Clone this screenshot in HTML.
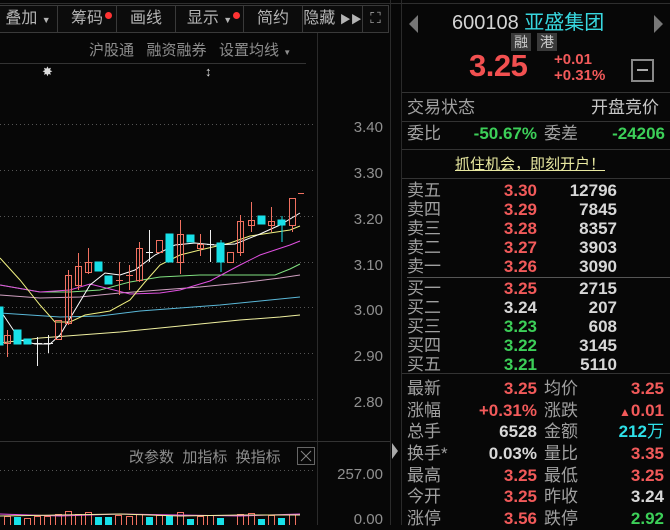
<!DOCTYPE html>
<html><head><meta charset="utf-8"><style>
*{margin:0;padding:0;box-sizing:border-box}
body{width:670px;height:525px;background:#070707;overflow:hidden;position:relative;font-family:"Liberation Sans","Noto Sans CJK SC",sans-serif;color:#a8a8a8}
.a{position:absolute;white-space:nowrap}
.tb{position:absolute;top:5px;height:28px;border:1px solid #3a3a3a;background:#0c0c0c;font-size:16px;color:#b4b4b4;line-height:26px;text-align:center}
.dot{position:absolute;width:7px;height:7px;border-radius:50%;background:#f33;top:6px}
.r{color:#f25a5a}.g{color:#3ccf58}.w{color:#d8d8d8}.c{color:#2ee0e8}
.hl{position:absolute;height:1px;background:#333}
.lab{font-size:17px;color:#a0a0a0}
.num{font-size:17px;font-weight:bold;text-align:right}
.ln{line-height:22px;height:22px}
</style></head><body>
<div class="hl" style="left:0;top:3px;width:670px;background:#2e2e2e"></div>
<div class="tb" style="left:-2px;width:60px">叠加 <span style="font-size:9px">▼</span></div>
<div class="tb" style="left:57px;width:60px">筹码<span class="dot" style="left:47px"></span></div>
<div class="tb" style="left:116px;width:60px">画线</div>
<div class="tb" style="left:175px;width:69px">显示 <span style="font-size:9px">▼</span><span class="dot" style="left:57px"></span></div>
<div class="tb" style="left:243px;width:60px">简约</div>
<div class="tb" style="left:302px;width:61px">隐藏 <span style="font-size:11px">▶▶</span></div>
<div class="tb" style="left:362px;width:27px;font-size:15px">⛶</div>
<div class="a" style="left:89px;top:39px;font-size:15px;color:#8e8e8e">沪股通&nbsp;&nbsp;&nbsp;融资融券&nbsp;&nbsp;&nbsp;设置均线 <span style="font-size:8px">▼</span></div>
<div class="hl" style="left:0;top:63px;width:306px"></div>
<div class="a" style="left:42px;top:64px;font-size:13px;color:#ddd">✸</div>
<div class="a" style="left:205px;top:64px;font-size:13px;color:#ddd">↕</div>
<div style="position:absolute;left:317px;top:33px;width:1px;height:492px;background:#2a2a2a"></div>
<div style="position:absolute;left:390px;top:0;width:1px;height:525px;background:#2a2a2a"></div>
<div style="position:absolute;left:401px;top:0;width:1px;height:525px;background:#2a2a2a"></div>
<div class="a" style="left:392px;top:443px;width:6px;height:16px;background:#aaa;clip-path:polygon(0 0,100% 50%,0 100%)"></div>
<svg class="a" style="left:0;top:0" width="390" height="525">
<g stroke="#555" stroke-dasharray="1 3" stroke-width="1">
<line x1="0" y1="124.5" x2="315" y2="124.5"/><line x1="0" y1="170.5" x2="315" y2="170.5"/>
<line x1="0" y1="216.5" x2="315" y2="216.5"/><line x1="0" y1="262.5" x2="315" y2="262.5"/>
<line x1="0" y1="307.5" x2="315" y2="307.5"/><line x1="0" y1="353.5" x2="315" y2="353.5"/>
<line x1="0" y1="399.5" x2="315" y2="399.5"/><line x1="0" y1="470.5" x2="315" y2="470.5"/>
</g>
<line x1="0" y1="441.5" x2="390" y2="441.5" stroke="#333"/>
<g font-family="Liberation Sans" font-size="15" fill="#909090" text-anchor="end">
<text x="383" y="132">3.40</text><text x="383" y="178">3.30</text><text x="383" y="224">3.20</text>
<text x="383" y="270">3.10</text><text x="383" y="315">3.00</text><text x="383" y="361">2.90</text>
<text x="383" y="407">2.80</text><text x="383" y="479">257.00</text><text x="383" y="524">0.00</text>
</g>
<polyline fill="none" stroke="#f0f0a0" stroke-width="1" points="0,343 40,338 80,335 120,332 160,328 200,324 240,320 280,317 300,315"/>
<polyline fill="none" stroke="#5ab8d8" stroke-width="1" points="0,313 60,317 100,316 140,311 180,308 220,305 260,301 300,297"/>
<polyline fill="none" stroke="#d0a0c0" stroke-width="1" points="0,295 40,298 80,297 120,293 160,290 200,287 240,283 280,278 300,275"/>
<polyline fill="none" stroke="#80e080" stroke-width="1" points="0,285 40,292 70,292 100,290 130,282 160,277 200,275 240,275 275,275 290,269 300,264"/>
<polyline fill="none" stroke="#e050e0" stroke-width="1" points="0,285 40,292 70,290 90,284 110,289 130,294 160,293 180,290 210,281 240,265 260,255 290,245 300,241"/>
<polyline fill="none" stroke="#f0f080" stroke-width="1" points="0,258 20,280 40,305 55,322 70,322 85,315 110,311 130,300 145,282 160,265 180,255 200,250 230,243 250,236 270,233 290,230 300,226"/>
<polyline fill="none" stroke="#fff" stroke-width="1" points="0,310 20,340 35,344 50,344 60,335 75,310 90,285 105,273 120,275 135,270 155,255 175,245 195,243 215,245 235,244 260,234 280,225 300,213"/>
<g stroke-width="1">
<g fill="#18e0e8" stroke="#18e0e8"><rect x="-2" y="307" width="5" height="38"/><rect x="14" y="330" width="7" height="14"/><rect x="24" y="339" width="7" height="5"/><rect x="95" y="262" width="7" height="9"/><rect x="105" y="276" width="7" height="8"/><rect x="166" y="234" width="7" height="28"/><rect x="187" y="235" width="7" height="7"/><rect x="217" y="243" width="7" height="19"/><rect x="258" y="216" width="7" height="8"/><rect x="278" y="220" width="7" height="5"/>
<line x1="282" y1="216" x2="282" y2="242"/><line x1="221" y1="240" x2="221" y2="272"/></g>
<g fill="none" stroke="#f07060"><rect x="4.5" y="335.5" width="6" height="8"/><line x1="7.5" y1="330" x2="7.5" y2="357"/>
<rect x="55.5" y="320.5" width="6" height="19"/><rect x="65.5" y="275.5" width="6" height="48"/><line x1="68.5" y1="270" x2="68.5" y2="325"/>
<rect x="75.5" y="266.5" width="6" height="19"/><line x1="78.5" y1="253" x2="78.5" y2="290"/><rect x="85.5" y="262.5" width="6" height="10"/><line x1="88.5" y1="248" x2="88.5" y2="274"/>
<rect x="136.5" y="248.5" width="6" height="32"/><line x1="139.5" y1="242" x2="139.5" y2="282"/><rect x="156.5" y="240.5" width="6" height="12"/>
<rect x="177.5" y="234.5" width="6" height="28"/><line x1="180.5" y1="220" x2="180.5" y2="274"/><rect x="197.5" y="244.5" width="6" height="4"/><line x1="200.5" y1="234" x2="200.5" y2="256"/>
<rect x="227.5" y="252.5" width="6" height="10"/><rect x="237.5" y="221.5" width="6" height="31"/><line x1="240.5" y1="215" x2="240.5" y2="256"/>
<rect x="248.5" y="220.5" width="6" height="5"/><line x1="251.5" y1="202" x2="251.5" y2="232"/><rect x="268.5" y="221.5" width="6" height="4"/><line x1="271.5" y1="207" x2="271.5" y2="232"/>
<rect x="289.5" y="198.5" width="6" height="27"/><line x1="292.5" y1="225" x2="292.5" y2="232"/><line x1="298" y1="193.5" x2="304" y2="193.5"/>
<line x1="119.5" y1="262" x2="119.5" y2="295"/><line x1="116" y1="280.5" x2="123" y2="280.5"/><line x1="129.5" y1="265" x2="129.5" y2="290"/><line x1="126" y1="275.5" x2="133" y2="275.5"/></g>
<g stroke="#eee"><line x1="37.5" y1="337" x2="37.5" y2="366"/><line x1="33" y1="343.5" x2="42" y2="343.5"/><line x1="48.5" y1="335" x2="48.5" y2="353"/><line x1="44" y1="343.5" x2="53" y2="343.5"/>
<line x1="149.5" y1="230" x2="149.5" y2="262"/><line x1="146" y1="252.5" x2="153" y2="252.5"/><line x1="210.5" y1="230" x2="210.5" y2="262"/><line x1="207" y1="244.5" x2="214" y2="244.5"/></g>
</g>
<g fill="none" stroke="#f07060"><rect x="4.5" y="516.5" width="6" height="10"/><rect x="24.5" y="518.5" width="6" height="8"/><rect x="34.5" y="516.5" width="6" height="10"/><rect x="44.5" y="516.5" width="6" height="10"/><rect x="55.5" y="514.5" width="6" height="12"/><rect x="65.5" y="511.5" width="6" height="15"/><rect x="75.5" y="514.5" width="6" height="12"/><rect x="85.5" y="512.5" width="6" height="14"/><rect x="115.5" y="515.5" width="6" height="11"/><rect x="126.5" y="516.5" width="6" height="10"/><rect x="136.5" y="514.5" width="6" height="12"/><rect x="156.5" y="515.5" width="6" height="11"/><rect x="177.5" y="512.5" width="6" height="14"/><rect x="197.5" y="516.5" width="6" height="10"/><rect x="207.5" y="515.5" width="6" height="11"/><rect x="237.5" y="514.5" width="6" height="12"/><rect x="248.5" y="513.5" width="6" height="13"/><rect x="268.5" y="515.5" width="6" height="11"/><rect x="289.5" y="514.5" width="6" height="12"/></g>
<g fill="#18e0e8"><rect x="14" y="517" width="7" height="8"/><rect x="95" y="517" width="7" height="8"/><rect x="105" y="517" width="7" height="8"/><rect x="146" y="517" width="7" height="8"/><rect x="166" y="516" width="7" height="9"/><rect x="187" y="519" width="7" height="6"/><rect x="217" y="518" width="7" height="7"/><rect x="258" y="519" width="7" height="6"/><rect x="278" y="518" width="7" height="7"/></g>
<polyline fill="none" stroke="#e050e0" points="0,514 60,516 120,514 180,515 240,516 300,514"/>
<polyline fill="none" stroke="#f0f0a0" points="0,516 60,515 120,514 180,516 240,515 300,515"/>
<rect x="297.5" y="447.5" width="17" height="17" fill="none" stroke="#666"/>
<path d="M301 451 L311 461 M311 451 L301 461" stroke="#888"/>
</svg>
<div class="a" style="left:129px;top:446px;font-size:15px;color:#8e8e8e">改参数&nbsp;&nbsp;加指标&nbsp;&nbsp;换指标</div>

<div class="a" style="left:409px;top:15px;width:9px;height:18px;background:#777;clip-path:polygon(100% 0,0 50%,100% 100%)"></div>
<div class="a" style="left:654px;top:15px;width:9px;height:18px;background:#777;clip-path:polygon(0 0,100% 50%,0 100%)"></div>
<div class="a" style="left:452px;top:6px;font-size:20px;color:#d4d4d4">600108 <span style="color:#38d8e0">亚盛集团</span></div>
<div class="a" style="left:511px;top:33px;width:20px;height:18px;background:#3a3a3a;font-size:14px;line-height:18px;text-align:center;color:#ccc">融</div>
<div class="a" style="left:537px;top:33px;width:20px;height:18px;background:#3a3a3a;font-size:14px;line-height:18px;text-align:center;color:#ccc">港</div>
<div class="a" style="left:469px;top:48px;font-size:31px;font-weight:bold;color:#f25050;letter-spacing:-0.5px">3.25</div>
<div class="a r" style="left:554px;top:52px;font-size:15px;font-weight:bold;line-height:16px">+0.01<br>+0.31%</div>
<div class="a" style="left:631px;top:59px;width:23px;height:23px;border:2px solid #888"><div style="position:absolute;left:4px;top:8px;width:11px;height:2px;background:#aaa"></div></div>
<div class="hl" style="left:402px;top:92px;width:268px"></div>
<div class="a lab ln" style="left:407px;top:97px">交易状态</div>
<div class="a lab ln" style="left:591px;top:97px;color:#c8c8c8">开盘竞价</div>
<div class="hl" style="left:402px;top:121px;width:268px"></div>
<div class="a lab ln" style="left:407px;top:123px">委比</div>
<div class="a num g ln" style="left:460px;top:123px;width:77px">-50.67%</div>
<div class="a lab ln" style="left:544px;top:123px">委差</div>
<div class="a num g ln" style="left:590px;top:123px;width:75px">-24206</div>
<div class="hl" style="left:402px;top:149px;width:268px"></div>
<div class="a" style="left:455px;top:153px;font-size:15px;color:#e8e8a0;text-decoration:underline">抓住机会，即刻开户！</div>
<div class="hl" style="left:402px;top:178px;width:268px"></div>
<div style="position:absolute;left:407px;top:181px;width:260px;font-size:17px;line-height:19px">
<div style="position:relative;height:19px"><span class="lab">卖五</span><span class="a num r" style="left:60px;width:70px">3.30</span><span class="a num w" style="left:120px;width:90px">12796</span></div>
<div style="position:relative;height:19px"><span class="lab">卖四</span><span class="a num r" style="left:60px;width:70px">3.29</span><span class="a num w" style="left:120px;width:90px">7845</span></div>
<div style="position:relative;height:19px"><span class="lab">卖三</span><span class="a num r" style="left:60px;width:70px">3.28</span><span class="a num w" style="left:120px;width:90px">8357</span></div>
<div style="position:relative;height:19px"><span class="lab">卖二</span><span class="a num r" style="left:60px;width:70px">3.27</span><span class="a num w" style="left:120px;width:90px">3903</span></div>
<div style="position:relative;height:19px"><span class="lab">卖一</span><span class="a num r" style="left:60px;width:70px">3.26</span><span class="a num w" style="left:120px;width:90px">3090</span></div>
<div style="height:3px"></div>
<div style="position:relative;height:19px"><span class="lab">买一</span><span class="a num r" style="left:60px;width:70px">3.25</span><span class="a num w" style="left:120px;width:90px">2715</span></div>
<div style="position:relative;height:19px"><span class="lab">买二</span><span class="a num w" style="left:60px;width:70px">3.24</span><span class="a num w" style="left:120px;width:90px">207</span></div>
<div style="position:relative;height:19px"><span class="lab">买三</span><span class="a num g" style="left:60px;width:70px">3.23</span><span class="a num w" style="left:120px;width:90px">608</span></div>
<div style="position:relative;height:19px"><span class="lab">买四</span><span class="a num g" style="left:60px;width:70px">3.22</span><span class="a num w" style="left:120px;width:90px">3145</span></div>
<div style="position:relative;height:19px"><span class="lab">买五</span><span class="a num g" style="left:60px;width:70px">3.21</span><span class="a num w" style="left:120px;width:90px">5110</span></div>
</div>
<div class="hl" style="left:407px;top:277px;width:263px;background:#555"></div>
<div class="hl" style="left:402px;top:373px;width:268px"></div>
<div style="position:absolute;left:407px;top:378px;width:260px;font-size:17px;line-height:21.7px">
<div style="position:relative;height:21.7px"><span class="lab">最新</span><span class="a num r" style="left:60px;width:70px">3.25</span><span class="a lab" style="left:137px">均价</span><span class="a num r" style="left:180px;width:77px">3.25</span></div>
<div style="position:relative;height:21.7px"><span class="lab">涨幅</span><span class="a num r" style="left:50px;width:80px">+0.31%</span><span class="a lab" style="left:137px">涨跌</span><span class="a num r" style="left:180px;width:77px"><span style="font-size:12px">▲</span>0.01</span></div>
<div style="position:relative;height:21.7px"><span class="lab">总手</span><span class="a num w" style="left:60px;width:70px">6528</span><span class="a lab" style="left:137px">金额</span><span class="a num c" style="left:180px;width:77px">212<span style="font-weight:normal">万</span></span></div>
<div style="position:relative;height:21.7px"><span class="lab">换手*</span><span class="a num w" style="left:50px;width:80px">0.03%</span><span class="a lab" style="left:137px">量比</span><span class="a num r" style="left:180px;width:77px">3.35</span></div>
<div style="position:relative;height:21.7px"><span class="lab">最高</span><span class="a num r" style="left:60px;width:70px">3.25</span><span class="a lab" style="left:137px">最低</span><span class="a num r" style="left:180px;width:77px">3.25</span></div>
<div style="position:relative;height:21.7px"><span class="lab">今开</span><span class="a num r" style="left:60px;width:70px">3.25</span><span class="a lab" style="left:137px">昨收</span><span class="a num w" style="left:180px;width:77px">3.24</span></div>
<div style="position:relative;height:21.7px"><span class="lab">涨停</span><span class="a num r" style="left:60px;width:70px">3.56</span><span class="a lab" style="left:137px">跌停</span><span class="a num g" style="left:180px;width:77px">2.92</span></div>
</div>
</body></html>
